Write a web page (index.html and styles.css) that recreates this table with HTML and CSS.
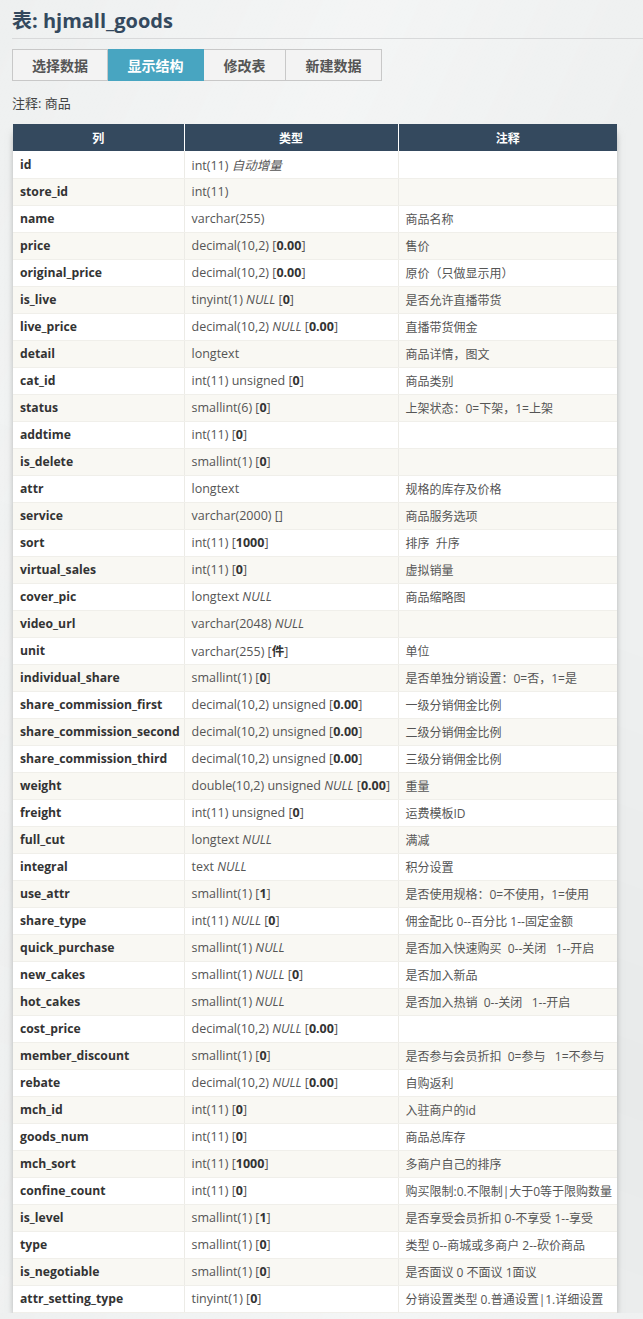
FILE: index.html
```html
<!DOCTYPE html>
<html lang="zh-CN">
<head>
<meta charset="utf-8">
<title>hjmall_goods</title>
<link rel="stylesheet" href="styles.css">
</head>
<body>
<div class="page">
  <h2 class="title">表: hjmall_goods</h2>
  <div class="tabs">
    <a class="tab t1">选择数据</a>
    <a class="tab t2 active">显示结构</a>
    <a class="tab t3">修改表</a>
    <a class="tab t4">新建数据</a>
  </div>
  <p class="note">注释: 商品</p>
  <table class="struct">
    <colgroup><col class="c1"><col class="c2"><col class="c3"></colgroup>
    <thead><tr><th>列</th><th>类型</th><th>注释</th></tr></thead>
    <tbody>
      <tr><th>id</th><td>int(11) <i>自动增量</i></td><td></td></tr>
      <tr><th>store_id</th><td>int(11)</td><td></td></tr>
      <tr><th>name</th><td>varchar(255)</td><td>商品名称</td></tr>
      <tr><th>price</th><td>decimal(10,2) [<b>0.00</b>]</td><td>售价</td></tr>
      <tr><th>original_price</th><td>decimal(10,2) [<b>0.00</b>]</td><td>原价（只做显示用）</td></tr>
      <tr><th>is_live</th><td>tinyint(1) <i>NULL</i> [<b>0</b>]</td><td>是否允许直播带货</td></tr>
      <tr><th>live_price</th><td>decimal(10,2) <i>NULL</i> [<b>0.00</b>]</td><td>直播带货佣金</td></tr>
      <tr><th>detail</th><td>longtext</td><td>商品详情，图文</td></tr>
      <tr><th>cat_id</th><td>int(11) unsigned [<b>0</b>]</td><td>商品类别</td></tr>
      <tr><th>status</th><td>smallint(6) [<b>0</b>]</td><td>上架状态：0=下架，1=上架</td></tr>
      <tr><th>addtime</th><td>int(11) [<b>0</b>]</td><td></td></tr>
      <tr><th>is_delete</th><td>smallint(1) [<b>0</b>]</td><td></td></tr>
      <tr><th>attr</th><td>longtext</td><td>规格的库存及价格</td></tr>
      <tr><th>service</th><td>varchar(2000) []</td><td>商品服务选项</td></tr>
      <tr><th>sort</th><td>int(11) [<b>1000</b>]</td><td>排序&nbsp;&nbsp;升序</td></tr>
      <tr><th>virtual_sales</th><td>int(11) [<b>0</b>]</td><td>虚拟销量</td></tr>
      <tr><th>cover_pic</th><td>longtext <i>NULL</i></td><td>商品缩略图</td></tr>
      <tr><th>video_url</th><td>varchar(2048) <i>NULL</i></td><td></td></tr>
      <tr><th>unit</th><td>varchar(255) [<b>件</b>]</td><td>单位</td></tr>
      <tr><th>individual_share</th><td>smallint(1) [<b>0</b>]</td><td>是否单独分销设置：0=否，1=是</td></tr>
      <tr><th>share_commission_first</th><td>decimal(10,2) unsigned [<b>0.00</b>]</td><td>一级分销佣金比例</td></tr>
      <tr><th>share_commission_second</th><td>decimal(10,2) unsigned [<b>0.00</b>]</td><td>二级分销佣金比例</td></tr>
      <tr><th>share_commission_third</th><td>decimal(10,2) unsigned [<b>0.00</b>]</td><td>三级分销佣金比例</td></tr>
      <tr><th>weight</th><td>double(10,2) unsigned <i>NULL</i> [<b>0.00</b>]</td><td>重量</td></tr>
      <tr><th>freight</th><td>int(11) unsigned [<b>0</b>]</td><td>运费模板ID</td></tr>
      <tr><th>full_cut</th><td>longtext <i>NULL</i></td><td>满减</td></tr>
      <tr><th>integral</th><td>text <i>NULL</i></td><td>积分设置</td></tr>
      <tr><th>use_attr</th><td>smallint(1) [<b>1</b>]</td><td>是否使用规格：0=不使用，1=使用</td></tr>
      <tr><th>share_type</th><td>int(11) <i>NULL</i> [<b>0</b>]</td><td>佣金配比 0--百分比 1--固定金额</td></tr>
      <tr><th>quick_purchase</th><td>smallint(1) <i>NULL</i></td><td>是否加入快速购买&nbsp;&nbsp;0--关闭&nbsp;&nbsp;&nbsp;1--开启</td></tr>
      <tr><th>new_cakes</th><td>smallint(1) <i>NULL</i> [<b>0</b>]</td><td>是否加入新品</td></tr>
      <tr><th>hot_cakes</th><td>smallint(1) <i>NULL</i></td><td>是否加入热销&nbsp;&nbsp;0--关闭&nbsp;&nbsp;&nbsp;1--开启</td></tr>
      <tr><th>cost_price</th><td>decimal(10,2) <i>NULL</i> [<b>0.00</b>]</td><td></td></tr>
      <tr><th>member_discount</th><td>smallint(1) [<b>0</b>]</td><td>是否参与会员折扣&nbsp;&nbsp;0=参与&nbsp;&nbsp;&nbsp;1=不参与</td></tr>
      <tr><th>rebate</th><td>decimal(10,2) <i>NULL</i> [<b>0.00</b>]</td><td>自购返利</td></tr>
      <tr><th>mch_id</th><td>int(11) [<b>0</b>]</td><td>入驻商户的id</td></tr>
      <tr><th>goods_num</th><td>int(11) [<b>0</b>]</td><td>商品总库存</td></tr>
      <tr><th>mch_sort</th><td>int(11) [<b>1000</b>]</td><td>多商户自己的排序</td></tr>
      <tr><th>confine_count</th><td>int(11) [<b>0</b>]</td><td>购买限制:0.不限制|大于0等于限购数量</td></tr>
      <tr><th>is_level</th><td>smallint(1) [<b>1</b>]</td><td>是否享受会员折扣 0-不享受 1--享受</td></tr>
      <tr><th>type</th><td>smallint(1) [<b>0</b>]</td><td>类型 0--商城或多商户 2--砍价商品</td></tr>
      <tr><th>is_negotiable</th><td>smallint(1) [<b>0</b>]</td><td>是否面议 0 不面议 1面议</td></tr>
      <tr><th>attr_setting_type</th><td>tinyint(1) [<b>0</b>]</td><td>分销设置类型 0.普通设置|1.详细设置</td></tr>
    </tbody>
  </table>
</div>
</body>
</html>
```

FILE: styles.css
```css
html, body {
  margin: 0;
  padding: 0;
}
body {
  background-color: #eef0f0;
  background-image:
    linear-gradient(115deg, rgba(255,255,255,0) 0%, rgba(255,255,255,0.35) 30%, rgba(255,255,255,0) 55%),
    linear-gradient(200deg, rgba(0,0,0,0) 40%, rgba(0,0,0,0.025) 70%, rgba(0,0,0,0) 100%);
  font-family: "Open Sans", "Noto Sans CJK SC", sans-serif;
  color: #444;
  overflow: hidden;
}
.page {
  padding: 0 0 0 12px;
}
.title {
  margin: 0;
  padding: 8px 0 5px 0;
  font-size: 20px;
  line-height: 25px;
  font-weight: 700;
  color: #34495e;
  border-bottom: 1px solid #d8d9da;
}
.tabs {
  display: flex;
  margin-top: 10px;
  width: 370px;
}
.tab {
  box-sizing: border-box;
  height: 32px;
  display: flex;
  align-items: center;
  justify-content: center;
  border: 1px solid #c8c8c8;
  border-left: none;
  background: #f3f3f3;
  color: #555;
  font-size: 14px;
  font-weight: 700;
}
.tab.t1 { width: 96px; border-left: 1px solid #c8c8c8; }
.tab.t2 { width: 96px; }
.tab.t3 { width: 82px; }
.tab.t4 { width: 96px; }
.tab.active {
  background: #48a5c1;
  border-color: #48a5c1;
  color: #fff;
}
.note {
  margin: 0;
  padding: 13px 0 0 0;
  font-size: 13px;
  line-height: 18px;
  color: #444;
}
.struct {
  margin: 12px 0 0 1px;
  width: 604px;
  border-collapse: collapse;
  table-layout: fixed;
  font-size: 12px;
  box-shadow: 0 6px 8px -3px rgba(0, 0, 0, 0.55);
}
.struct col.c1 { width: 171px; }
.struct col.c2 { width: 214px; }
.struct col.c3 { width: 219px; }
.struct thead th {
  background: #34495e;
  color: #fff;
  font-weight: 700;
  height: 27px;
  padding: 0;
  text-align: center;
  border-left: 1px solid #ffffff;
  font-size: 12px;
}
.struct thead th:first-child { border-left: none; }
.struct tbody tr { height: 27px; }
.struct tbody tr:nth-child(odd) { background: #ffffff; }
.struct tbody tr:nth-child(even) { background: #f9f8f3; }
.struct tbody th,
.struct tbody td {
  padding: 0 0 0 7px;
  text-align: left;
  white-space: nowrap;
  overflow: visible;
  border-bottom: 1px solid #f0efea;
  border-left: 1px solid #ecebe6;
  color: #555;
  font-weight: 400;
  font-size: 12.5px;
}
.struct tbody td:last-child { font-size: 12px; }
.struct tbody th {
  border-left: none;
  font-weight: 700;
  color: #333;
  font-size: 12.2px;
}
.struct tbody td b { color: #333; }
```
